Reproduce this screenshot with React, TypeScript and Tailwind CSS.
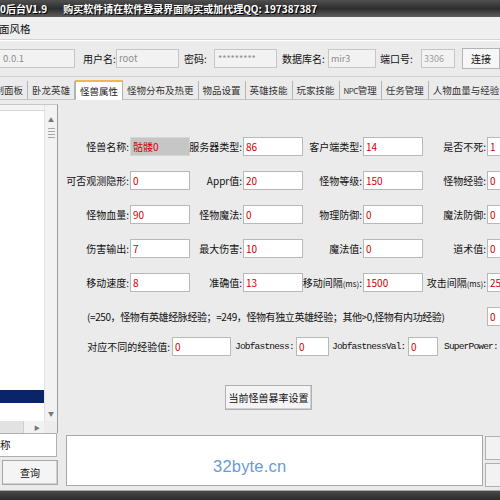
import React from "react";

const F = "font-['Noto_Sans_CJK_SC',sans-serif]";

function Inp({ v, cls, gray }: { v: string; cls: string; gray?: boolean }) {
  return (
    <div
      className={`${cls} h-[19px] shrink-0 border flex items-center pl-[2px] text-[10px] leading-none text-[#d40000] whitespace-nowrap overflow-hidden ${
        gray ? "bg-[#c6c6c6] border-[#d6d6d6]" : "bg-white border-[#b8b8b8]"
      }`}
    >
      {v}
    </div>
  );
}

function Lbl({ t, cls }: { t: React.ReactNode; cls: string }) {
  return (
    <div className={`${cls} shrink-0 flex justify-end items-center text-[10px] leading-none text-[#111] whitespace-nowrap pr-[1px]`}>
      {t}
    </div>
  );
}

type Cell = [React.ReactNode, string, boolean?];

function Row({ cells, mt }: { cells: Cell[]; mt: string }) {
  const lw = ["w-[72px]", "w-[53px]", "w-[60px]", "w-[64px]"];
  return (
    <div className={`flex items-center h-[19px] ${mt}`}>
      {cells.map((c, i) => (
        <React.Fragment key={i}>
          <Lbl t={c[0]} cls={lw[i]} />
          <Inp v={c[1]} cls="w-[60px]" gray={c[2]} />
        </React.Fragment>
      ))}
    </div>
  );
}

function Tab({ t, active, cls }: { t: React.ReactNode; active?: boolean; cls?: string }) {
  if (active)
    return (
      <div className="h-[20px] -mb-[1px] px-[4px] bg-white border-t-2 border-t-[#f0b850] border-x border-x-[#b0b0b0] flex items-center text-[9.5px] text-[#222] whitespace-nowrap relative z-10">
        {t}
      </div>
    );
  return (
    <div className={`${cls ?? ""} h-[18px] px-[4px] border-r border-r-[#b4b4b4] flex items-center text-[9.5px] text-[#333] whitespace-nowrap`}>
      {t}
    </div>
  );
}

const mono = "font-['Liberation_Mono',monospace] text-[9.5px] tracking-[-0.8px]";

export default function App() {
  return (
    <div className={`${F} w-[500px] h-[500px] overflow-hidden bg-[#ebebeb] flex flex-col`}>
      {/* title bar */}
      <div className="h-[17px] shrink-0 bg-linear-to-b from-[#505050] via-[#2e2e2e] to-[#5e5e5e] flex items-center text-white font-bold text-[10px] leading-none whitespace-nowrap [text-shadow:1px_1px_0_#000]">
        <span>0后台V1.9</span>
        <span className="ml-[16px]">购买软件请在软件登录界面购买或加代理QQ: 197387387</span>
      </div>
      {/* menu */}
      <div className="h-[23px] shrink-0 bg-[#efefef] border-b border-b-[#d4d4d4] flex items-center pt-[2px] text-[10.5px] text-[#111]">
        <span className="-ml-[1px]">面风格</span>
      </div>
      {/* toolbar */}
      <div className="h-[37px] shrink-0 border-t border-t-white border-b border-b-[#cfcfcf] flex items-center text-[10px] text-[#111]">
        <div className="-ml-[6px] w-[81px] h-[19px] bg-[#f2f2f2] border border-[#c6c6c6] flex items-center pl-[8px] text-[#8c8c8c] text-[9.5px]">0.0.1</div>
        <div className="w-[41px] pl-[8px] whitespace-nowrap">用户名:</div>
        <div className="w-[63px] h-[19px] bg-[#f2f2f2] border border-[#c6c6c6] flex items-center pl-[2px] text-[#8c8c8c] text-[9.5px]">root</div>
        <div className="w-[35px] pl-[5px] whitespace-nowrap">密码:</div>
        <div className="w-[63px] h-[19px] bg-[#f2f2f2] border border-[#c6c6c6] flex items-center pl-[3px] text-[#8c8c8c] text-[9px]">*********</div>
        <div className="w-[51px] pl-[5px] whitespace-nowrap">数据库名:</div>
        <div className="w-[48px] h-[19px] bg-[#f2f2f2] border border-[#c6c6c6] flex items-center pl-[2px] text-[#8c8c8c] text-[9px]">mir3</div>
        <div className="w-[45px] pl-[4px] whitespace-nowrap">端口号:</div>
        <div className="w-[34px] h-[19px] bg-[#f2f2f2] border border-[#c6c6c6] flex items-center pl-[2px] text-[#a0a0a0] text-[9px]">3306</div>
        <div className="ml-[7px] w-[38px] h-[21px] shrink-0 bg-[#f6f6f6] border border-[#b4b4b4] flex items-center justify-center">连接</div>
      </div>
      {/* tabs */}
      <div className="h-[22px] shrink-0 pt-[3px] flex items-end">
        <Tab t="控制面板" cls="-ml-[19px]" />
        <Tab t="卧龙英雄" />
        <Tab t="怪兽属性" active />
        <Tab t="怪物分布及热更" />
        <Tab t="物品设置" />
        <Tab t="英雄技能" />
        <Tab t="玩家技能" />
        <Tab t={<span><span className="text-[8px] tracking-[-0.6px]">NPC</span>管理</span>} />
        <Tab t="任务管理" />
        <Tab t="人物血量与经验" />
      </div>
      {/* tab page */}
      <div className="h-[333px] shrink-0 border-t border-t-[#c4c4c4] flex">
        {/* list */}
        <div className="w-[58px] shrink-0 mt-[4px] h-[329px] bg-white border-t border-t-[#c8c8c8] border-r border-r-[#9c9c9c] flex flex-col">
          <div className="flex-1 flex">
            <div className="w-[44px] flex flex-col">
              <div className="h-[6px] bg-[#f4f4f4] border-b border-b-[#d8d8d8]" />
              <div className="h-[279px]" />
              <div className="h-[13px] bg-[#0a246a]" />
            </div>
            <div className="w-[13px] bg-[#f2f2f2] border-l border-l-[#e2e2e2] flex flex-col items-center">
              <div className="h-[18px] flex items-end text-[6px] text-[#777] leading-none">▲</div>
              <div className="mt-[2px] w-[9px] h-[16px] flex flex-col justify-center gap-[2px] items-center">
                <div className="w-[7px] h-px bg-[#a8a8a8]" />
                <div className="w-[7px] h-px bg-[#a8a8a8]" />
                <div className="w-[7px] h-px bg-[#a8a8a8]" />
                <div className="w-[7px] h-px bg-[#a8a8a8]" />
              </div>
              <div className="flex-1" />
              <div className="h-[10px] text-[6px] text-[#777] leading-none">▼</div>
            </div>
          </div>
          <div className="h-[12px] flex bg-[#f2f2f2]">
            <div className="w-[24px] bg-[#e2e2e2] border-r border-r-[#cfcfcf]" />
            <div className="w-[20px] flex items-center justify-end pr-[4px] text-[6px] text-[#777]">▶</div>
            <div className="flex-1 bg-[#ececec]" />
          </div>
        </div>
        {/* fields */}
        <div className="w-[500px] shrink-0 pt-[37px] flex flex-col">
          <Row mt="" cells={[["怪兽名称:", "骷髅0", true], ["服务器类型:", "86"], ["客户端类型:", "14"], ["是否不死:", "1"]]} />
          <Row mt="mt-[15px]" cells={[["可否观测隐形:", "0"], [<span>Appr值:</span>, "20"], ["怪物等级:", "150"], ["怪物经验:", "0"]]} />
          <Row mt="mt-[15px]" cells={[["怪物血量:", "90"], ["怪物魔法:", "0"], ["物理防御:", "0"], ["魔法防御:", "0"]]} />
          <Row mt="mt-[15px]" cells={[["伤害输出:", "7"], ["最大伤害:", "10"], ["魔法值:", "0"], ["道术值:", "0"]]} />
          <Row mt="mt-[15px]" cells={[["移动速度:", "8"], ["准确值:", "13"], [<span>移动间隔<span className="text-[8px]">(ms)</span>:</span>, "1500"], [<span>攻击间隔<span className="text-[8px]">(ms)</span>:</span>, "250"]]} />
          <div className="flex items-center h-[19px] mt-[15px]">
            <div className="w-[429px] shrink-0 pl-[29px] text-[10px] leading-none text-[#111] whitespace-nowrap tracking-[-0.4px]">
              (=250，怪物有英雄经脉经验；=249，怪物有独立英雄经验；其他&gt;0,怪物有内功经验)
            </div>
            <Inp v="0" cls="w-[60px]" />
          </div>
          <div className="flex items-center h-[19px] mt-[11px] text-[10px] leading-none text-[#111] whitespace-nowrap">
            <div className="w-[114px] shrink-0 flex justify-end pr-[2px]">对应不同的经验值:</div>
            <Inp v="0" cls="w-[59px]" />
            <div className={`${mono} ml-[4px] w-[61px] shrink-0`}>Jobfastness:</div>
            <Inp v="0" cls="w-[33px]" />
            <div className={`${mono} ml-[3px] w-[76px] shrink-0`}>JobfastnessVal:</div>
            <Inp v="0" cls="w-[30px]" />
            <div className={`${mono} ml-[6px] shrink-0`}>SuperPower:</div>
          </div>
          <div className="mt-[29px] ml-[167px] w-[87px] h-[25px] bg-[#f4f4f4] border border-[#b0b0b0] shadow-[inset_-1px_-1px_0_#d0d0d0] flex items-center justify-center text-[10px] text-[#111] whitespace-nowrap">
            当前怪兽暴率设置
          </div>
        </div>
      </div>
      {/* bottom */}
      <div className="h-[58px] shrink-0 flex">
        <div className="w-[58px] shrink-0 flex flex-col">
          <div className="mt-[1px] h-[24px] w-[57px] bg-white border border-[#b0b0b0] border-l-0 flex items-center text-[10.5px] text-[#111]">称</div>
          <div className="mt-[3px] ml-[2px] w-[56px] h-[25px] bg-[#f4f4f4] border border-[#a8a8a8] shadow-[inset_-1px_-1px_0_#d0d0d0] flex items-center justify-center text-[10px] text-[#111]">查询</div>
        </div>
        <div className="ml-[8px] mt-[3px] w-[417px] h-[51px] shrink-0 bg-white border border-[#a8a8a8] relative">
          <div className="absolute left-[146px] top-[22px] font-['Liberation_Sans',sans-serif] text-[16.5px] leading-none text-[#6a9bd3] tracking-[0.2px]">32byte.cn</div>
        </div>
        <div className="ml-[2px] mt-[4px] flex flex-col gap-[3px]">
          <div className="w-[20px] h-[24px] bg-[#f2f2f2] border border-[#b0b0b0]" />
          <div className="w-[20px] h-[24px] bg-[#f2f2f2] border border-[#b0b0b0]" />
        </div>
      </div>
      <div className="h-[1px] shrink-0 bg-[#a8a8a8]" />
      <div className="flex-1 bg-linear-to-b from-[#4a4a4a] to-[#2a2a2a]" />
    </div>
  );
}
